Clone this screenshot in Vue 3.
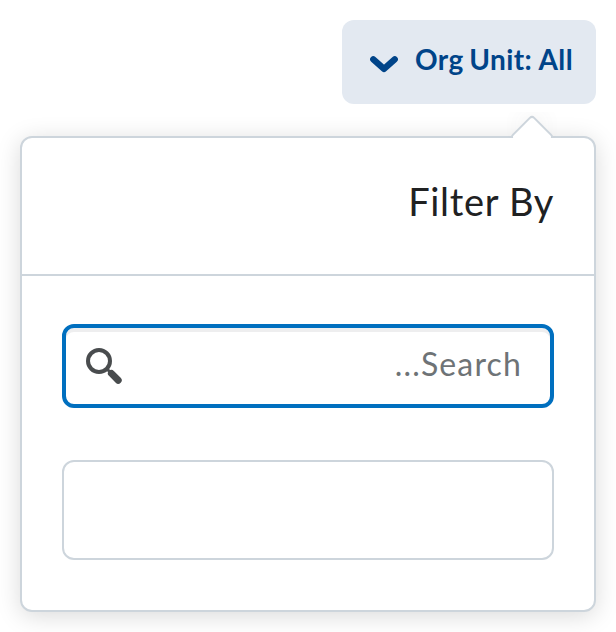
<script setup>
import { ref } from 'vue'

const search = ref('')
</script>

<template>
  <main class="page">
    <button class="opener" type="button">
      <svg class="chevron" width="28" height="18" viewBox="0 0 28 18">
        <path d="M3.3 4.3 L14 13.8 L24.7 4.3" />
      </svg>
      <span class="opener-text"><span class="lead">Org </span>Unit: All</span>
    </button>
    <section class="dropdown">
      <div class="pointer"><div class="pointer-tip"></div></div>
      <header class="header"><h2 class="title">Filter By</h2></header>
      <div class="content">
        <label class="search">
          <svg class="glass" width="38" height="38" viewBox="0 0 38 38">
            <circle cx="14" cy="14" r="11" />
            <path class="neck" d="M21.5 21.5 L26 26" />
            <path class="handle" d="M26.4 26.4 L33.2 33.2" />
          </svg>
          <input v-model="search" class="search-input" type="text" placeholder="...Search" />
        </label>
        <div class="list"></div>
      </div>
    </section>
  </main>
</template>

<style>
body {
  background: #fff;
}
</style>

<style scoped>
.page {
  box-sizing: border-box;
  width: 616px;
  height: 632px;
  padding: 20px;
  display: flex;
  flex-direction: column;
  align-items: flex-end;
  gap: 32px;
  overflow: hidden;
  font-family: Lato, "Liberation Sans", sans-serif;
}
.opener {
  box-sizing: border-box;
  width: 254px;
  height: 84px;
  padding: 0 23px 0 28px;
  display: flex;
  align-items: center;
  justify-content: space-between;
  border: 0;
  border-radius: 12px;
  background: #e3e9f1;
  color: #004489;
  font: bold 28px/40px Lato, sans-serif;
  letter-spacing: 0.4px;
  white-space: nowrap;
}
.chevron {
  margin-top: 4px;
  fill: none;
  stroke: #004489;
  stroke-width: 6.4;
  stroke-linecap: round;
  stroke-linejoin: round;
}
.opener-text {
  margin-top: -6px;
}
.lead {
  word-spacing: -1.5px;
}
.dropdown {
  box-sizing: border-box;
  position: relative;
  width: 576px;
  height: 476px;
  border: 2px solid #cdd5dc;
  border-radius: 12px;
  background: #fff;
  box-shadow: 0 4px 24px rgba(0, 0, 0, 0.15);
}
.pointer {
  position: absolute;
  top: -26px;
  right: 36px;
  width: 52px;
  height: 26px;
  overflow: hidden;
}
.pointer-tip {
  box-sizing: border-box;
  width: 32px;
  height: 32px;
  margin: 9px auto 0;
  border: 2px solid #cdd5dc;
  border-radius: 4px;
  background: #fff;
  box-shadow: -8px -8px 24px -10px rgba(73, 76, 78, 0.2);
  transform: rotate(45deg);
}
.header {
  box-sizing: border-box;
  height: 138px;
  padding: 35px 40px 0;
  border-bottom: 2px solid #cdd5dc;
}
.title {
  margin: 0;
  color: #202122;
  font-size: 38px;
  font-weight: 400;
  line-height: 56px;
  letter-spacing: 0.7px;
  text-align: right;
}
.content {
  padding: 48px 40px;
  display: flex;
  flex-direction: column;
  gap: 52px;
}
.search {
  box-sizing: border-box;
  height: 84px;
  padding: 0 28px 0 19px;
  display: flex;
  align-items: center;
  border: 4px solid #006fbf;
  border-radius: 12px;
  box-shadow: inset 0 4px 0 #eeeeef;
}
.glass {
  flex: none;
  fill: none;
  stroke: #494c4e;
  stroke-width: 4;
}
.neck {
  stroke-width: 3;
}
.handle {
  stroke-width: 7;
  stroke-linecap: round;
}
.search-input {
  flex: 1;
  min-width: 0;
  margin-top: -4px;
  padding: 0;
  border: 0;
  outline: 0;
  background: transparent;
  color: #494c4e;
  font: 400 32px/48px Lato, sans-serif;
  letter-spacing: 1.15px;
  text-align: right;
}
.search-input::placeholder {
  color: #6e7376;
  opacity: 1;
}
.list {
  box-sizing: border-box;
  height: 100px;
  border: 2px solid #cdd5dc;
  border-radius: 12px;
}
</style>
